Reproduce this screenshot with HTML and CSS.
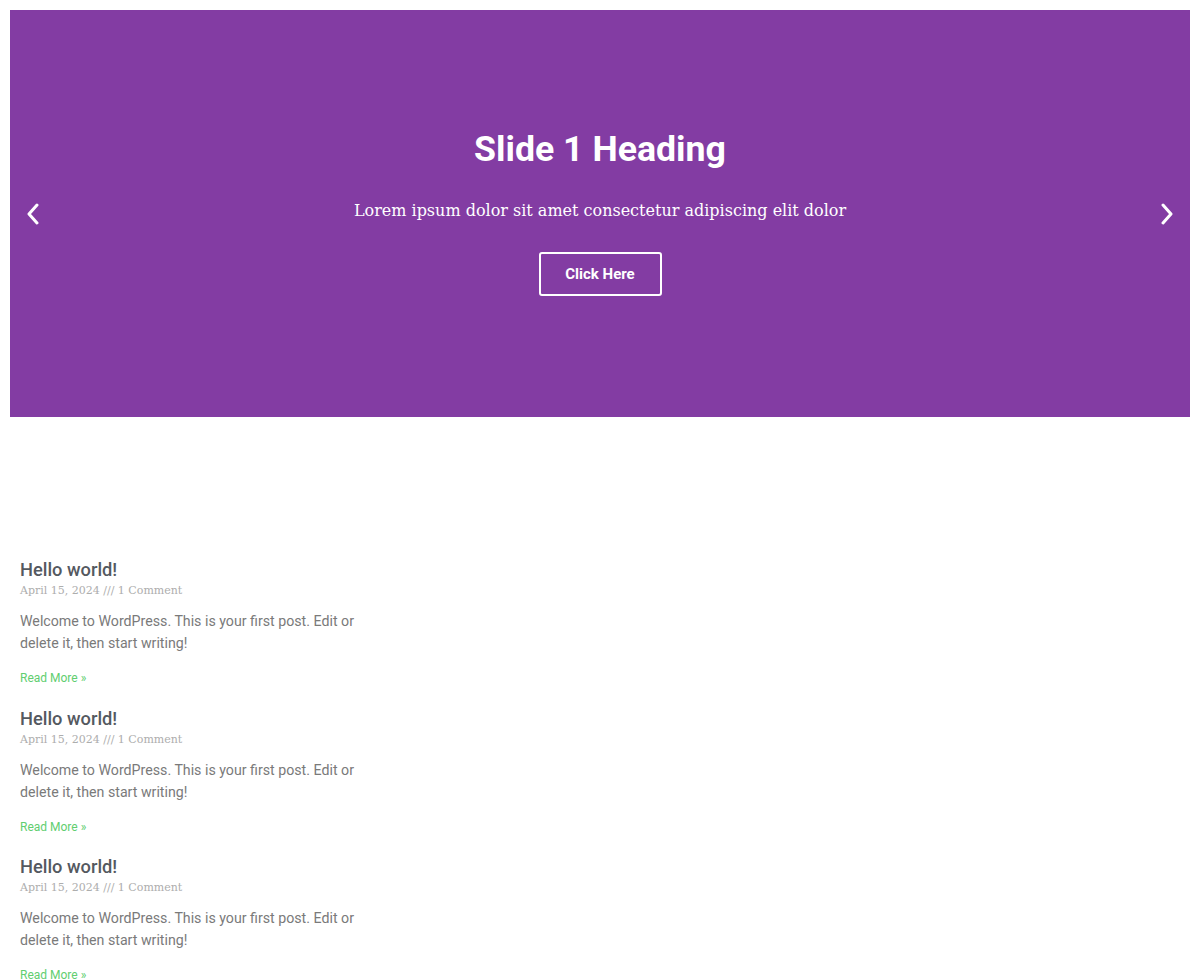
FILE: index.html
```html
<!DOCTYPE html>
<html lang="en">
<head>
<meta charset="utf-8">
<title>Slides</title>
<link rel="stylesheet" href="styles.css">
</head>
<body>
<div class="page">
  <section class="slider">
    <button class="arrow arrow-prev" aria-label="Previous slide">
      <svg width="14" height="22" viewBox="0 0 14 22"><path d="M11 2 L3 11 L11 20" fill="none" stroke="#fff" stroke-width="3" stroke-linecap="round" stroke-linejoin="round"/></svg>
    </button>
    <div class="slide-content">
      <h2 class="slide-heading">Slide 1 Heading</h2>
      <p class="slide-desc">Lorem ipsum dolor sit amet consectetur adipiscing elit dolor</p>
      <a class="slide-btn" href="#">Click Here</a>
    </div>
    <button class="arrow arrow-next" aria-label="Next slide">
      <svg width="14" height="22" viewBox="0 0 14 22"><path d="M3 2 L11 11 L3 20" fill="none" stroke="#fff" stroke-width="3" stroke-linecap="round" stroke-linejoin="round"/></svg>
    </button>
  </section>

  <section class="posts">
    <article class="post">
      <h3 class="post-title">Hello world!</h3>
      <div class="post-meta">April 15, 2024 /// 1 Comment</div>
      <p class="post-excerpt">Welcome to WordPress. This is your first post. Edit or delete it, then start writing!</p>
      <a class="read-more" href="#">Read More »</a>
    </article>
    <article class="post">
      <h3 class="post-title">Hello world!</h3>
      <div class="post-meta">April 15, 2024 /// 1 Comment</div>
      <p class="post-excerpt">Welcome to WordPress. This is your first post. Edit or delete it, then start writing!</p>
      <a class="read-more" href="#">Read More »</a>
    </article>
    <article class="post">
      <h3 class="post-title">Hello world!</h3>
      <div class="post-meta">April 15, 2024 /// 1 Comment</div>
      <p class="post-excerpt">Welcome to WordPress. This is your first post. Edit or delete it, then start writing!</p>
      <a class="read-more" href="#">Read More »</a>
    </article>
  </section>
</div>
</body>
</html>
```

FILE: styles.css
```css
* { box-sizing: border-box; }
html, body { margin: 0; padding: 0; background: #fff; }
body { font-family: Roboto, "Liberation Sans", sans-serif; }

.page { padding: 10px; }

.slider {
  height: 407px;
  background: #833ca3;
  display: flex;
  align-items: center;
  justify-content: space-between;
  padding: 0 13px;
}

.arrow {
  background: none;
  border: 0;
  padding: 0;
  width: 20px;
  height: 24px;
  display: flex;
  align-items: center;
  justify-content: center;
  cursor: pointer;
}

.slide-content {
  flex: 1;
  display: flex;
  flex-direction: column;
  align-items: center;
  text-align: center;
  padding-bottom: 4px;
}

.slide-heading {
  margin: 0 0 28px;
  font-family: Roboto, sans-serif;
  font-weight: 700;
  font-size: 35.7px;
  line-height: 42px;
  color: #fff;
}

.slide-desc {
  margin: 0 0 29px;
  font-family: "Roboto Slab", "DejaVu Serif", serif;
  font-size: 16px;
  line-height: 25px;
  color: #fff;
}

.slide-btn {
  display: inline-flex;
  align-items: center;
  justify-content: center;
  width: 123px;
  height: 44px;
  border: 2px solid #fff;
  border-radius: 3px;
  color: #fff;
  text-decoration: none;
  font-family: Roboto, sans-serif;
  font-weight: 700;
  font-size: 15px;
}

.posts {
  padding: 142px 10px 0;
  width: 380px;
  display: flex;
  flex-direction: column;
  gap: 21.5px;
}

.post-title {
  margin: 0;
  font-family: Roboto, sans-serif;
  font-weight: 500;
  font-size: 18.3px;
  line-height: 22px;
  color: #54595f;
}

.post-meta {
  margin-top: 1px;
  font-family: "Roboto Slab", "DejaVu Serif", serif;
  font-size: 11px;
  line-height: 18px;
  color: #adadad;
}

.post-excerpt {
  margin: 10px 0 16px;
  font-family: Roboto, sans-serif;
  font-size: 14.2px;
  line-height: 22px;
  color: #7a7a7a;
}

.read-more {
  display: block;
  font-family: Roboto, sans-serif;
  font-size: 12px;
  line-height: 16px;
  color: #61ce70;
  text-decoration: none;
}
```
